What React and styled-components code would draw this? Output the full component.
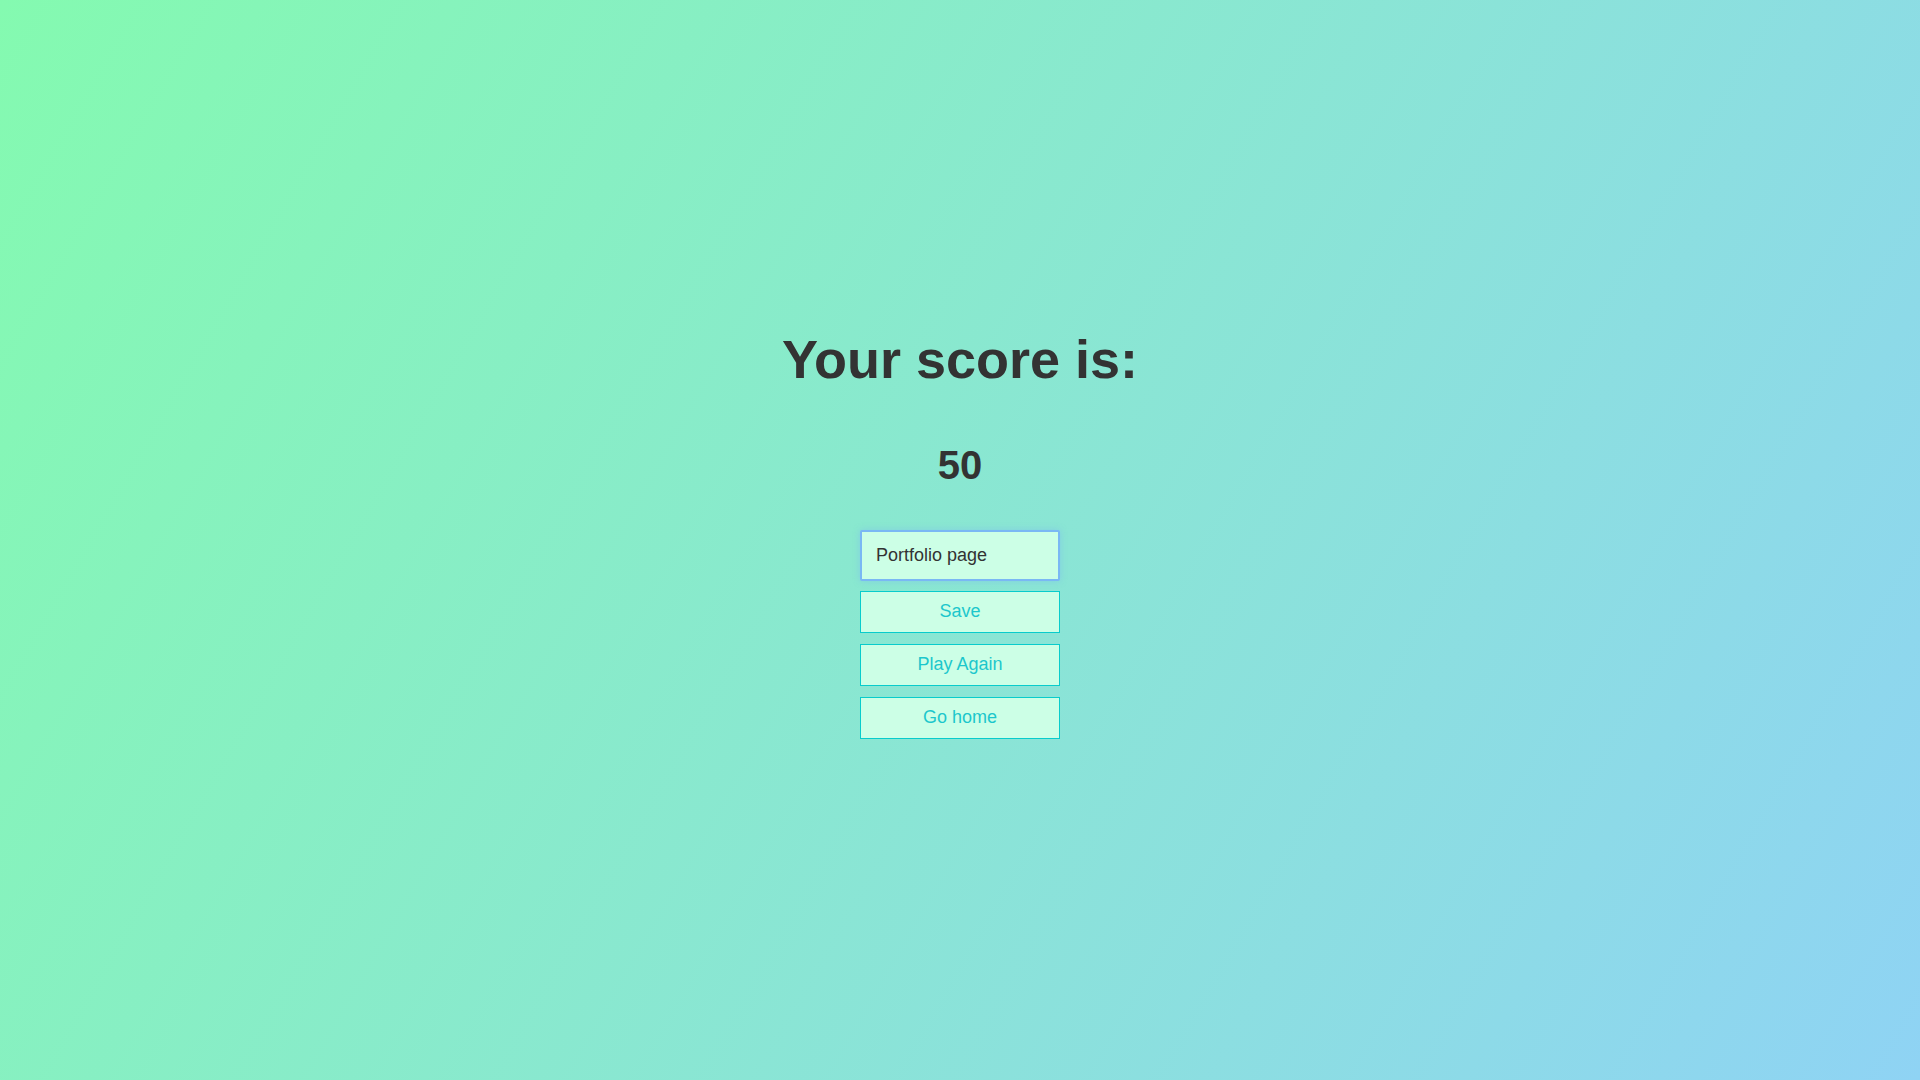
import React from 'react';
import styled, { createGlobalStyle } from 'styled-components';

const GlobalStyle = createGlobalStyle`
    html, body {
        margin: 0;
        padding: 0;
    }
    body {
        font-family: "Liberation Sans", Arial, sans-serif;
        color: #333333;
    }
`;

export default function App() {
    return (
        <Page>
            <GlobalStyle />
            <Result>
                <Title>Your score is:</Title>
                <Score>50</Score>
                <SaveForm onSubmit={(e) => e.preventDefault()}>
                    <NameInput type="text" defaultValue="Portfolio page" />
                    <ActionButton type="submit">Save</ActionButton>
                </SaveForm>
                <ActionButton>Play Again</ActionButton>
                <ActionButton>Go home</ActionButton>
            </Result>
        </Page>
    );
}

const Page = styled.div`
    min-height: 100vh;
    width: 100%;
    background-image: linear-gradient(120deg, #84fab0 0%, #8fd3f4 100%);
    display: flex;
    align-items: center;
    justify-content: center;
`;

const Result = styled.div`
    display: flex;
    flex-direction: column;
    align-items: center;
    gap: 11px;
    padding-bottom: 15px;
`;

const Title = styled.h1`
    font-size: 54px;
    font-weight: 700;
    margin: 0 0 40px;
    line-height: 64px;
`;

const Score = styled.h2`
    font-size: 40px;
    font-weight: 700;
    margin: 0 0 31px;
    line-height: 46px;
`;

const SaveForm = styled.form`
    display: flex;
    flex-direction: column;
    gap: 10px;
`;

const NameInput = styled.input`
    box-sizing: border-box;
    width: 200px;
    height: 51px;
    padding: 0 14px;
    font-family: "Liberation Sans", Arial, sans-serif;
    font-size: 18px;
    color: #333333;
    background: #ccffe6;
    border: 2px solid #7ab8f4;
    border-radius: 2px;
    box-shadow: 0 0 6px rgba(122, 184, 244, 0.5);
    outline: none;
`;

const ActionButton = styled.button`
    box-sizing: border-box;
    width: 200px;
    height: 42px;
    font-family: "Liberation Sans", Arial, sans-serif;
    font-size: 18px;
    color: #1cc7cc;
    background: #ccffe6;
    border: 1px solid #08cccc;
    cursor: pointer;
`;
